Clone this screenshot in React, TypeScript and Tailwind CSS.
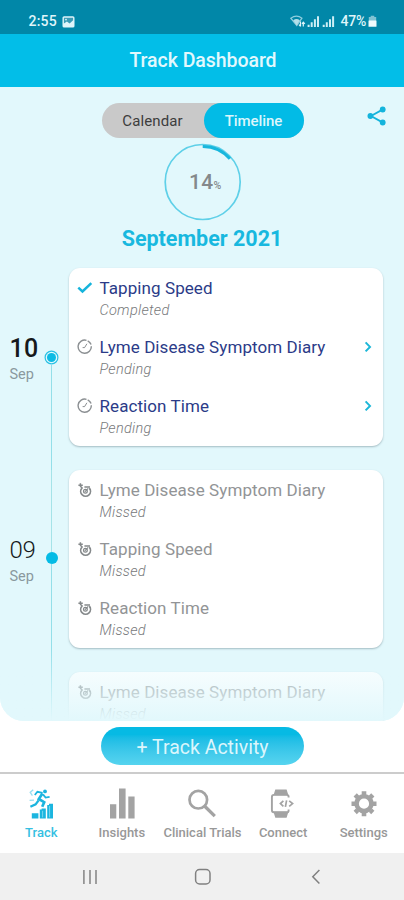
import type { ReactNode } from "react";
import clsx from "clsx";

type Status = "Completed" | "Pending" | "Missed";

type Activity = { name: string; status: Status };

type Day = { day?: string; month?: string; today?: boolean; activities: Activity[] };

const days: Day[] = [
  {
    day: "10",
    month: "Sep",
    today: true,
    activities: [
      { name: "Tapping Speed", status: "Completed" },
      { name: "Lyme Disease Symptom Diary", status: "Pending" },
      { name: "Reaction Time", status: "Pending" },
    ],
  },
  {
    day: "09",
    month: "Sep",
    activities: [
      { name: "Lyme Disease Symptom Diary", status: "Missed" },
      { name: "Tapping Speed", status: "Missed" },
      { name: "Reaction Time", status: "Missed" },
    ],
  },
  {
    activities: [{ name: "Lyme Disease Symptom Diary", status: "Missed" }],
  },
];

const StatusIcon = ({ status }: { status: Status }) => {
  if (status === "Completed") {
    return (
      <svg width="16" height="16" viewBox="0 0 16 16" fill="none">
        <path d="M1.3 7.6l4.2 3.9L14.3 3.2" stroke="#16b4dc" strokeWidth="2.5" />
      </svg>
    );
  }
  if (status === "Pending") {
    return (
      <svg width="16" height="16" viewBox="0 0 16 16" fill="none" stroke="#8b8f92">
        <path d="M9.5 1.3A6.6 6.6 0 1 0 14.3 7.2" strokeWidth="1.4" />
        <path d="M10.7 1.8A6.8 6.8 0 0 1 14.1 5.6" strokeWidth="1.4" />
        <path d="M9.9 4.8L7.6 8.6M7.7 8.6H5.6" strokeWidth="1" />
      </svg>
    );
  }
  return (
    <svg width="16" height="16" viewBox="0 0 16 16" fill="none" stroke="#85898b">
      <path d="M4.8 6.2A4.9 4.9 0 1 0 12.3 6.1" strokeWidth="1.7" />
      <path d="M1.4 3.3H5.8M3.4 1.2V4.2L5.6 6.6M7.4 4.9H13" strokeWidth="1.5" />
      <circle cx="8.4" cy="9.3" r="1.9" strokeWidth="1.2" />
      <path d="M7.8 9.8L11.2 6.4" strokeWidth="1.2" />
    </svg>
  );
};

const ActivityRow = ({ name, status }: Activity) => (
  <div className="flex h-[59px] pt-[9px]">
    <div className="ml-2 mt-[3px] h-4 w-[23px] shrink-0">
      <StatusIcon status={status} />
    </div>
    <div className="flex-1 whitespace-nowrap">
      <div
        className={clsx(
          "text-[17px] leading-[22px] tracking-[0.08px]",
          status === "Missed" ? "text-[#929496]" : "text-[#2b3b88]",
        )}
      >
        {name}
      </div>
      <div className="pt-px text-[14.5px] font-light leading-[22px] tracking-[0.3px] text-[#77797b] italic">
        {status}
      </div>
    </div>
    {status === "Pending" && (
      <svg className="mt-1 mr-[9px]" width="12" height="14" viewBox="0 0 12 14" fill="none">
        <path d="M3.6 2.4L8 6.9L3.6 11.4" stroke="#1cb7d8" strokeWidth="2" />
      </svg>
    )}
  </div>
);

const DayRow = ({ day, first, last }: { day: Day; first: boolean; last: boolean }) => (
  <div className={clsx("flex shrink-0", last ? "h-[49px]" : "h-[202px]")}>
    <div className="w-11 pl-[9.5px]">
      {day.day && (
        <>
          <div
            className={clsx(
              "mt-[65px] text-[#15191b]",
              day.today
                ? "pt-px text-[25px] leading-[29px] font-medium tracking-[0.3px]"
                : "text-[24px] leading-[30px] font-light tracking-[-0.4px]",
            )}
          >
            {day.day}
          </div>
          <div className="pt-[2px] text-[14.5px] leading-[20px] text-[#8a999e]">{day.month}</div>
        </>
      )}
    </div>
    <div className="flex w-[15px] flex-col items-center">
      {!last && <div className={clsx("w-px", first ? "h-[81.5px]" : "h-[82px] bg-[#a5e3e8]")} />}
      {day.today && (
        <svg width="15" height="15" viewBox="0 0 15 15">
          <circle cx="7.5" cy="7.5" r="6.4" fill="none" stroke="#27c0e4" strokeWidth="1.2" />
          <circle cx="7.5" cy="7.5" r="4.5" fill="#0dbbe4" />
        </svg>
      )}
      {day.day && !day.today && <div className="size-[12px] rounded-full bg-[#05bbe5]" />}
      <div className="w-px flex-1 bg-[#94dfe9]" />
    </div>
    <div
      className={clsx(
        "ml-[9.5px] w-[314px] bg-white shadow-[0_1px_2px_rgba(60,90,100,0.38)]",
        last ? "h-[49px] rounded-t-[11px]" : "h-[177.5px] rounded-[11px]",
      )}
    >
      {day.activities.map((activity) => (
        <ActivityRow key={activity.name} {...activity} />
      ))}
    </div>
  </div>
);

const StatusBar = () => (
  <div className="flex h-[34px] shrink-0 items-center bg-[#0187a8] pt-[9px] pr-[27px] pl-[28.5px] text-[14px] font-medium text-[#dff5fa]">
    <span className="tracking-[0.2px]">2:55</span>
    <svg className="ml-[5px]" width="13" height="12" viewBox="0 0 13 12">
      <rect x="0.5" y="0.2" width="12" height="11.4" rx="1.6" fill="#dff5fa" />
      <path d="M1.9 7.4V1.8H11.1V4.2L7.6 7.4L4.9 5.4Z" fill="#3b9cb6" />
      <circle cx="4" cy="3.6" r="0.9" fill="#dff5fa" />
    </svg>
    <svg className="mr-[4px] ml-auto" width="46" height="13" viewBox="0 0 46 13" fill="none">
      <path d="M0.8 3.2Q6.5 -0.8 12 3.2L6.8 10.4Z" stroke="#8fcede" strokeWidth="1.2" />
      <path d="M3.2 5.2Q6.5 3 9.8 5.2L6.7 10.4Z" fill="#b4e0ea" />
      <path d="M10.5 6.5V11.4M13.3 11.4V7.2M9 9.6L10.5 11.4M12 8.8L13.3 7.2L14.9 8.8" stroke="#dff5fa" strokeWidth="1.2" />
      <path
        d="M18.6 12V9.8M21.7 12V7.3M24.9 12V4.2M28 12V1.2M33.7 12V9.8M36.8 12V7.3M40 12V4.2M43.1 12V1.2"
        stroke="#cdeef5"
        strokeWidth="2"
      />
    </svg>
    <span className="-tracking-[0.2px]">47%</span>
    <svg className="ml-[2px]" width="9" height="13" viewBox="0 0 9 13">
      <path d="M2.7 0.8H6.3V2H8.2V6H0.8V2H2.7Z" fill="#7fc3d4" />
      <rect x="0.5" y="5.5" width="8" height="6.3" rx="0.6" fill="#eefafd" />
    </svg>
  </div>
);

const TrackIcon = () => (
  <svg width="28" height="32" viewBox="0 0 28 32" fill="none" stroke="#1bb5df">
    <circle cx="18" cy="3.4" r="1.9" fill="#1bb5df" stroke="none" />
    <path d="M15.4 5.4L11.8 11L17.2 14.2L15.2 18.8" strokeWidth="2.7" />
    <path d="M11.6 12.4L8.6 16.4L3.4 18.8" strokeWidth="2.3" />
    <path d="M15.6 4.8L10.4 3.8L7.8 7M16 6.4L18.6 9.6L22.6 8.8" strokeWidth="1.8" />
    <path d="M6.2 1.8L3.2 4.4L5.4 7.6M2.6 12.3L7 12.2" strokeWidth="1.3" opacity="0.45" />
    <path
      d="M4.8 25.2H11.4V30.6H4.8ZM12.8 21.6H14.6V20.4H18.8V30.6H12.8ZM20.2 17H22V15.8H26V30.6H20.2Z"
      fill="#1bb5df"
      stroke="none"
    />
    <path d="M15.6 22.8V29.4M22.6 18V29.4" stroke="#b9ecf8" strokeWidth="0.6" />
  </svg>
);

const InsightsIcon = () => (
  <svg width="28" height="32" viewBox="0 0 28 32" fill="#a3a3a3">
    <path d="M2 16.3H8.3V30.6H2ZM11 0.6H17.6V30.6H11ZM20.3 8.5H26.6V30.6H20.3Z" />
  </svg>
);

const TrialsIcon = () => (
  <svg width="30" height="32" viewBox="0 0 30 32" fill="none" stroke="#a3a3a3">
    <circle cx="11.3" cy="11.7" r="8.8" strokeWidth="2.7" />
    <path d="M17.5 18L27.8 28.2" strokeWidth="3.3" />
  </svg>
);

const ConnectIcon = () => (
  <svg width="28" height="32" viewBox="0 0 28 32" fill="none" stroke="#a3a3a3">
    <path d="M6.3 1.6H17.6L19.4 7.3H4.5ZM4.5 23.8H19.4L17.6 29.8H6.3Z" fill="#a3a3a3" stroke="none" />
    <path
      d="M19.6 9.6V8.8Q19.6 6.9 17.6 6.9H5Q2.9 6.9 2.9 9.2V22Q2.9 24.3 5 24.3H17.6Q19.6 24.3 19.6 22.4V21.6"
      strokeWidth="1.9"
    />
    <path d="M14.4 12.8L11.4 15.6L14.4 18.4M17.6 12.4L16.4 18.8M20.2 12.8L23.6 15.6L20.2 18.4" strokeWidth="1.7" />
  </svg>
);

const SettingsIcon = () => (
  <svg width="28" height="32" viewBox="0 0 28 32" fill="none" stroke="#a3a3a3">
    <circle cx="14" cy="15.7" r="7.4" strokeWidth="4.6" />
    <path
      d="M14 3.2V7M14 24.4V28.2M1.5 15.7H5M23 15.7H26.5M5.2 6.9L7.6 9.3M20.4 22.1L22.8 24.5M5.2 24.5L7.6 22.1M20.4 9.3L22.8 6.9"
      strokeWidth="4.6"
    />
  </svg>
);

const tabs: { label: string; icon: ReactNode }[] = [
  { label: "Track", icon: <TrackIcon /> },
  { label: "Insights", icon: <InsightsIcon /> },
  { label: "Clinical Trials", icon: <TrialsIcon /> },
  { label: "Connect", icon: <ConnectIcon /> },
  { label: "Settings", icon: <SettingsIcon /> },
];

export default function App() {
  return (
    <div className="flex h-[900px] w-[404px] flex-col bg-white font-[Roboto,sans-serif]">
      <StatusBar />
      <header className="flex h-[53px] shrink-0 items-center justify-center bg-[#02bee8] pl-[2px] text-[19.5px] font-medium tracking-[-0.05px] text-[#e2f8fd]">
        Track Dashboard
      </header>

      <main className="relative flex h-[634px] shrink-0 flex-col overflow-hidden rounded-b-[24px] bg-[#e2f8fc]">
        <div className="grid shrink-0 grid-cols-[1fr_202px_1fr] pt-[16px] pl-px">
          <div />
          <div className="flex h-[35px] rounded-full bg-[#c9c9c9] text-[15px]">
            <div className="flex w-[102px] items-center justify-center pt-[2px] tracking-[0.1px] text-[#3d3d3d]">
              Calendar
            </div>
            <div className="flex w-[100px] items-center justify-center rounded-full bg-[#02bbe6] pt-[2px] font-medium tracking-[-0.05px] text-[#dcf6fc]">
              Timeline
            </div>
          </div>
          <svg className="mt-[3px] ml-[63px]" width="20" height="20" viewBox="0 0 20 20" fill="#14b4dc">
            <path d="M15.5 3.6L4 10L15.5 16.4" fill="none" stroke="#14b4dc" strokeWidth="1.8" />
            <circle cx="15.7" cy="3.5" r="2.9" />
            <circle cx="3.4" cy="10" r="2.9" />
            <circle cx="15.7" cy="16.5" r="2.9" />
          </svg>
        </div>

        <div className="mt-[5px] grid shrink-0 place-items-center pl-px">
          <svg className="col-start-1 row-start-1" width="78" height="78" viewBox="0 0 78 78" fill="none">
            <circle cx="38.7" cy="39" r="37.5" stroke="#5fd0e8" strokeWidth="1.7" />
            <path d="M38.7 3.4A35.6 35.6 0 0 1 65.9 15.8" stroke="#18b7dd" strokeWidth="3" />
          </svg>
          <div className="col-start-1 row-start-1 flex items-baseline pt-[2px] pl-[5px] text-[#84898b]">
            <span className="text-[21px] font-medium tracking-[0.3px]">14</span>
            <span className="text-[10.5px] font-medium">%</span>
          </div>
        </div>

        <h1 className="shrink-0 pt-[4px] text-center text-[21.5px] leading-[28px] font-bold text-[#18b8df]">
          September 2021
        </h1>

        <div className="flex flex-col pt-[15px]">
          {days.map((day, index) => (
            <DayRow key={index} day={day} first={index === 0} last={index === days.length - 1} />
          ))}
        </div>

        <div className="absolute inset-x-0 bottom-0 h-[72px] bg-linear-to-b from-[#e2f8fc]/0 to-[#e2f8fc]" />
      </main>

      <div className="flex h-[51px] shrink-0 items-start justify-center pt-[6px] pl-px">
        <button className="h-[38px] w-[203px] rounded-full bg-linear-to-b from-[#06bae4] from-20% to-[#56d4ef] pt-[3px] text-[19.5px] text-[#dcf6fc]">
          + Track Activity
        </button>
      </div>

      <nav className="grid h-[81px] shrink-0 grid-cols-5 border-t-2 border-[#cccccc] pt-[14px] pl-px">
        {tabs.map((tab, index) => (
          <div key={tab.label} className="flex flex-col items-center">
            {tab.icon}
            <span
              className={clsx(
                "mt-[4px] text-[13px] leading-[18px] font-medium whitespace-nowrap",
                index === 0 ? "text-[#35bfe2]" : "text-[#989898]",
              )}
            >
              {tab.label}
            </span>
          </div>
        ))}
      </nav>

      <div className="flex h-[47px] shrink-0 items-center bg-[#f0f0f0]">
        <svg className="ml-[82px]" width="16" height="18" viewBox="0 0 16 18" stroke="#8a8a8a" strokeWidth="1.6">
          <path d="M1.9 2V16M8 2V16M14 2V16" />
        </svg>
        <svg className="ml-[96px]" width="18" height="18" viewBox="0 0 18 18" fill="none" stroke="#808080" strokeWidth="1.5">
          <rect x="1.6" y="1.6" width="14.4" height="14.4" rx="4" />
        </svg>
        <svg className="ml-[99px]" width="10" height="18" viewBox="0 0 10 18" fill="none" stroke="#808080" strokeWidth="1.5">
          <path d="M8.4 2L1.8 8.8L8.4 15.6" />
        </svg>
      </div>
    </div>
  );
}
